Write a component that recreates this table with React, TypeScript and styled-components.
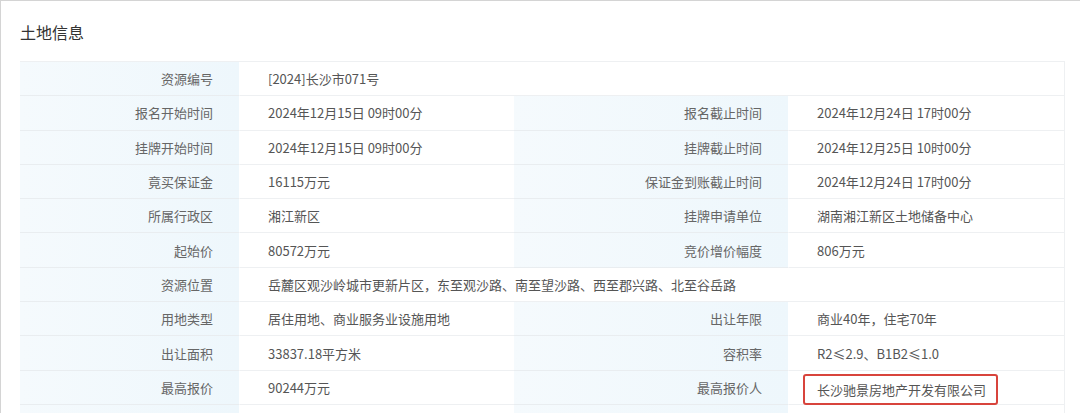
import React from "react";
import styled, { createGlobalStyle } from "styled-components";

const GlobalStyle = createGlobalStyle`
  html, body {
    margin: 0;
    padding: 0;
    background: #fff;
  }
  body {
    font-family: "Noto Sans CJK SC", "Noto Sans", sans-serif;
  }
`;

const Card = styled.div`
  border-top: 1px solid #d4d4d4;
  border-left: 1px solid #d4d4d4;
  padding: 19px 16px 0 19px;
  height: 413px;
  box-sizing: border-box;
  overflow: hidden;
`;

const Title = styled.h2`
  margin: 0;
  font-size: 16px;
  font-weight: 400;
  line-height: 24px;
  color: #333;
`;

const Grid = styled.div`
  margin-top: 17px;
  display: grid;
  grid-template-columns: 220px 274px 275px 275px;
  grid-auto-rows: 34.3px;
  border-top: 1px solid #eef0f2;
  border-right: 1px solid #eef0f2;
  width: 1044px;
`;

const Label = styled.div`
  background: linear-gradient(90deg, #f5fafd 0%, #eef7fc 100%);
  border-bottom: 1px solid #e9edf0;
  border-right: 1px solid #ffffff;
  color: #666;
  font-size: 13px;
  display: flex;
  align-items: center;
  justify-content: flex-end;
  padding-right: 26px;
  box-sizing: border-box;
`;

const Value = styled.div<{ $span?: number }>`
  grid-column: span ${({ $span }) => $span ?? 1};
  background: #fff;
  border-bottom: 1px solid #eef0f2;
  color: #555;
  font-size: 13px;
  display: flex;
  align-items: center;
  padding-left: 28px;
  box-sizing: border-box;
  white-space: nowrap;
`;

const Mark = styled.span`
  display: inline-flex;
  align-items: center;
  height: 31px;
  box-sizing: border-box;
  margin-left: -14px;
  margin-top: 5px;
  padding: 0 10px 0 12px;
  border: 2px solid #d8443c;
  border-radius: 3px;
`;

type Row = [string, React.ReactNode, string?, React.ReactNode?];

const rows: Row[] = [
  ["资源编号", "[2024]长沙市071号"],
  ["报名开始时间", "2024年12月15日 09时00分", "报名截止时间", "2024年12月24日 17时00分"],
  ["挂牌开始时间", "2024年12月15日 09时00分", "挂牌截止时间", "2024年12月25日 10时00分"],
  ["竟买保证金", "16115万元", "保证金到账截止时间", "2024年12月24日 17时00分"],
  ["所属行政区", "湘江新区", "挂牌申请单位", "湖南湘江新区土地储备中心"],
  ["起始价", "80572万元", "竞价增价幅度", "806万元"],
  ["资源位置", "岳麓区观沙岭城市更新片区，东至观沙路、南至望沙路、西至郡兴路、北至谷岳路"],
  ["用地类型", "居住用地、商业服务业设施用地", "出让年限", "商业40年，住宅70年"],
  ["出让面积", "33837.18平方米", "容积率", "R2≤2.9、B1B2≤1.0"],
  ["最高报价", "90244万元", "最高报价人", <Mark>长沙驰景房地产开发有限公司</Mark>],
  ["", "", "", ""],
];

export default function App() {
  return (
    <>
      <GlobalStyle />
      <Card>
        <Title>土地信息</Title>
        <Grid>
          {rows.map(([l1, v1, l2, v2], i) =>
            l2 === undefined ? (
              <React.Fragment key={i}>
                <Label>{l1}</Label>
                <Value $span={3}>{v1}</Value>
              </React.Fragment>
            ) : (
              <React.Fragment key={i}>
                <Label>{l1}</Label>
                <Value>{v1}</Value>
                <Label>{l2}</Label>
                <Value>{v2}</Value>
              </React.Fragment>
            )
          )}
        </Grid>
      </Card>
    </>
  );
}
